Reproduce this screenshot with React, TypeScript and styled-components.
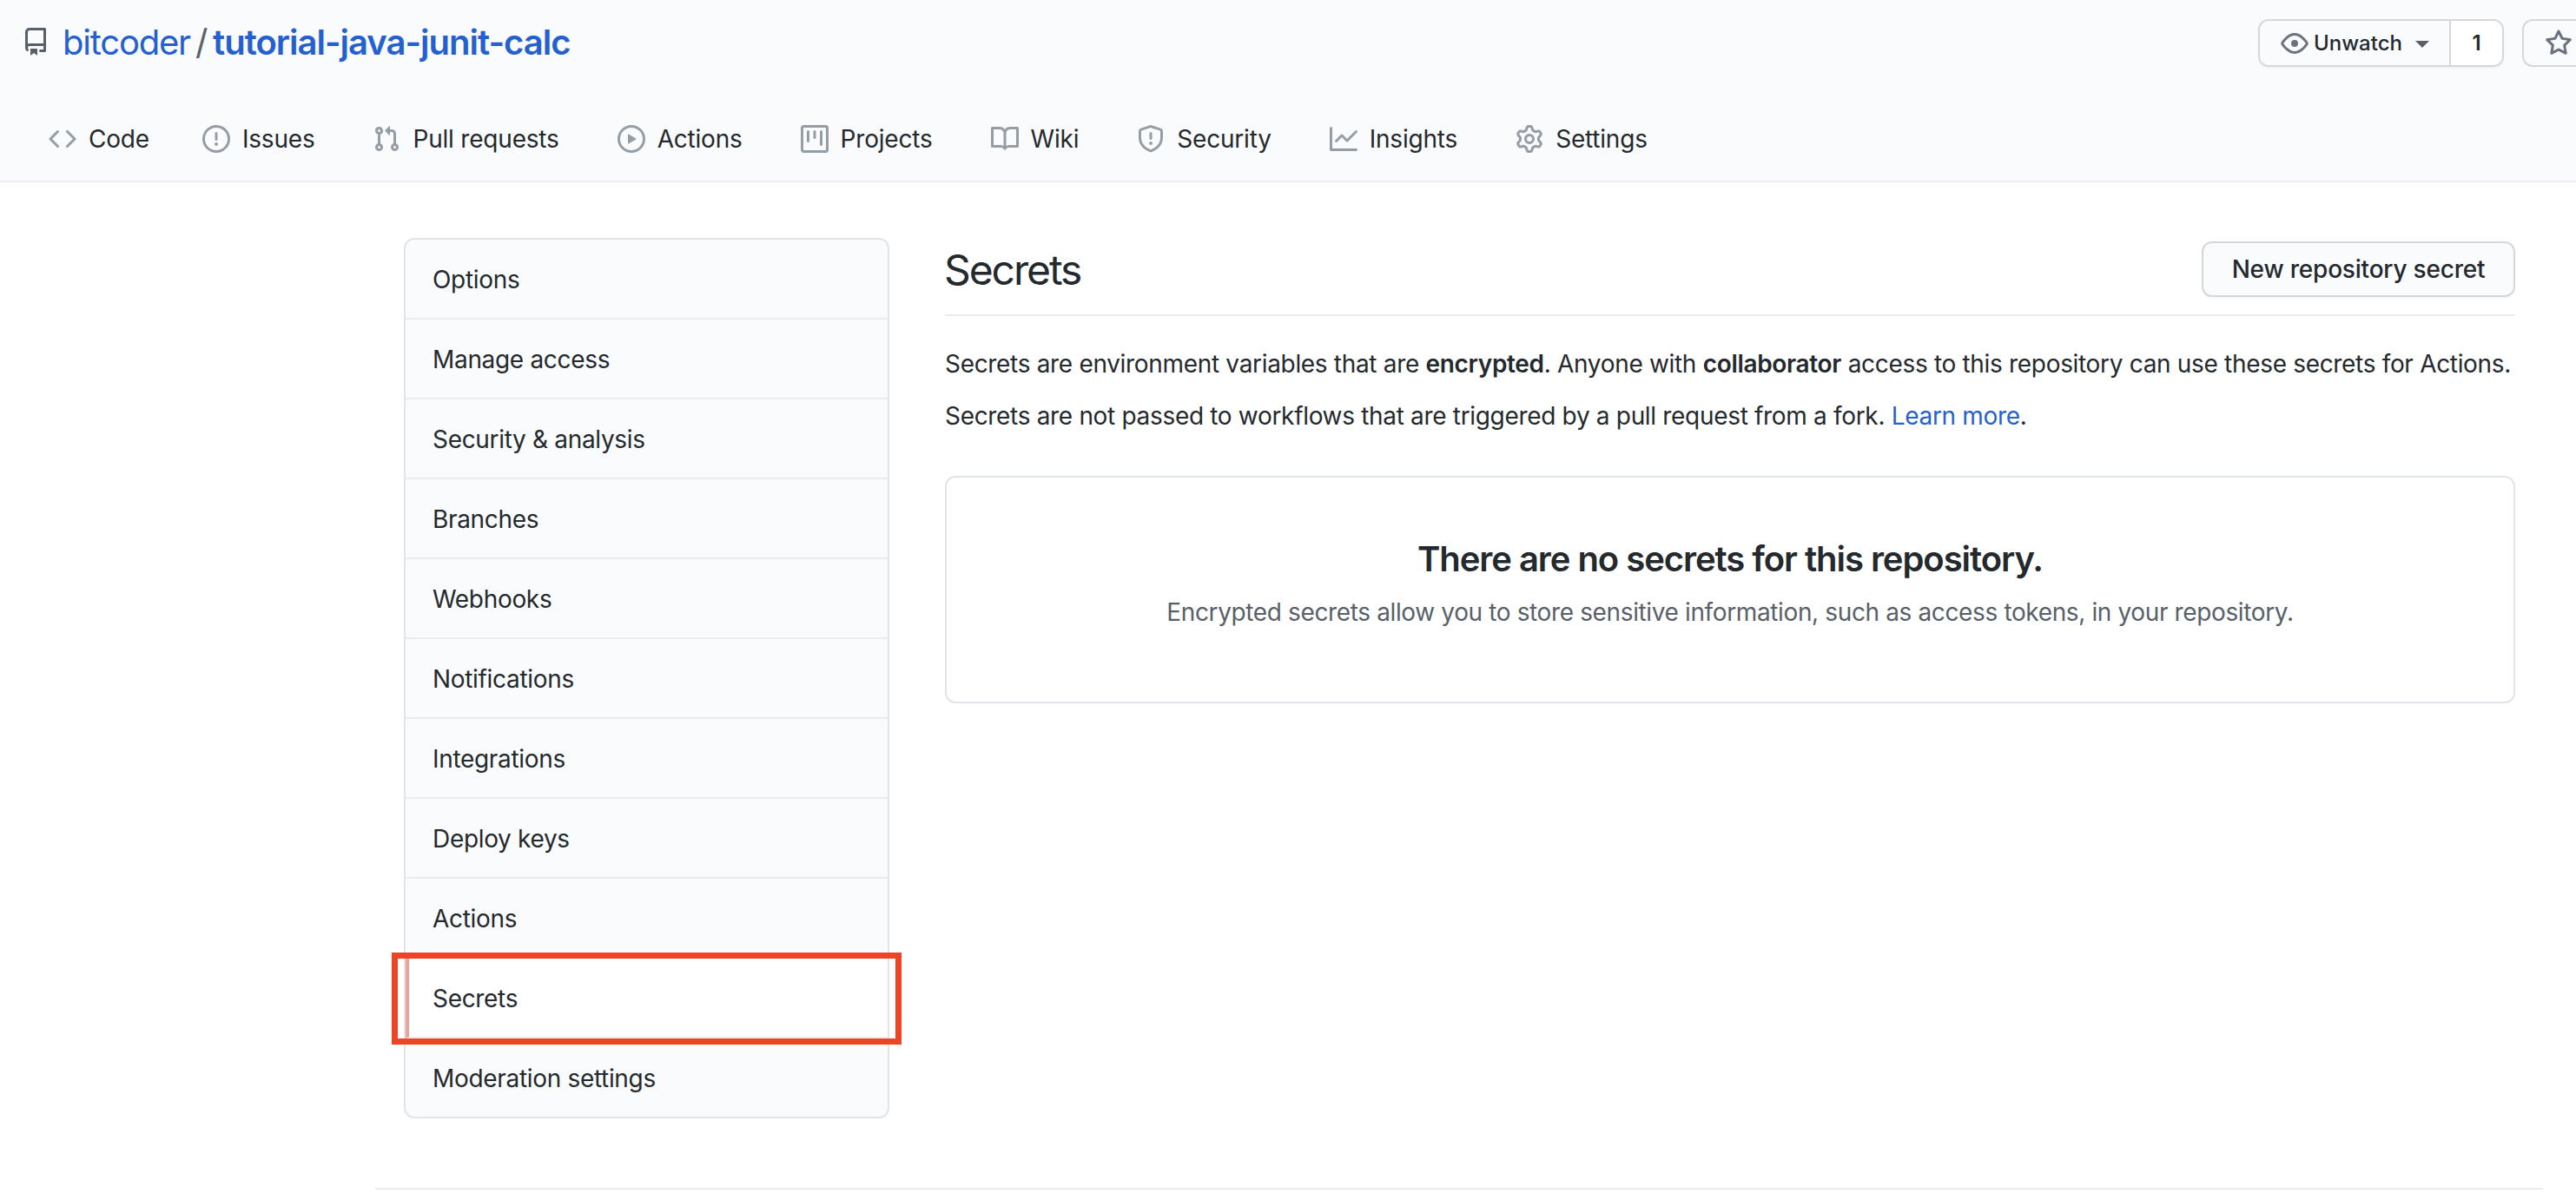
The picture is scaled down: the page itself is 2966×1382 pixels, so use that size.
import React from 'react';
import styled, { createGlobalStyle } from 'styled-components';

const GlobalStyle = createGlobalStyle`
  html, body {
    margin: 0;
    padding: 0;
    background: #fff;
    overflow: hidden;
  }
  body {
    font-family: Inter, "Liberation Sans", sans-serif;
    color: #24292e;
    letter-spacing: -0.32px;
  }
`;

const paths: Record<string, string> = {
  repo: 'M2 2.5A2.5 2.5 0 014.5 0h8.75a.75.75 0 01.75.75v12.5a.75.75 0 01-.75.75h-2.5a.75.75 0 110-1.5h1.75v-2h-8a1 1 0 00-.714 1.7.75.75 0 01-1.072 1.05A2.495 2.495 0 012 11.5v-9zm10.5-1V9h-8c-.356 0-.694.074-1 .208V2.5a1 1 0 011-1h8zM5 12.25v3.25a.25.25 0 00.4.2l1.45-1.087a.25.25 0 01.3 0L8.6 15.7a.25.25 0 00.4-.2v-3.25a.25.25 0 00-.25-.25h-3.5a.25.25 0 00-.25.25z',
  code: 'M4.72 3.22a.75.75 0 011.06 1.06L2.06 8l3.72 3.72a.75.75 0 11-1.06 1.06L.47 8.53a.75.75 0 010-1.06l4.25-4.25zm6.56 0a.75.75 0 10-1.06 1.06L13.94 8l-3.72 3.72a.75.75 0 101.06 1.06l4.25-4.25a.75.75 0 000-1.06l-4.25-4.25z',
  issue: 'M8 1.5a6.5 6.5 0 100 13 6.5 6.5 0 000-13zM0 8a8 8 0 1116 0A8 8 0 010 8zm9 3a1 1 0 11-2 0 1 1 0 012 0zm-.25-6.25a.75.75 0 00-1.5 0v3.5a.75.75 0 001.5 0v-3.5z',
  pull: 'M7.177 3.073L9.573.677A.25.25 0 0110 .854v4.792a.25.25 0 01-.427.177L7.177 3.427a.25.25 0 010-.354zM3.75 2.5a.75.75 0 100 1.5.75.75 0 000-1.5zm-2.25.75a2.25 2.25 0 113 2.122v5.256a2.251 2.251 0 11-1.5 0V5.372A2.25 2.25 0 011.5 3.25zM11 2.5h-1V4h1a1 1 0 011 1v5.628a2.251 2.251 0 101.5 0V5A2.5 2.5 0 0011 2.5zm1 10.25a.75.75 0 111.5 0 .75.75 0 01-1.5 0zM3.75 12a.75.75 0 100 1.5.75.75 0 000-1.5z',
  play: 'M1.5 8a6.5 6.5 0 1113 0 6.5 6.5 0 01-13 0zM8 0a8 8 0 100 16A8 8 0 008 0zM6.379 5.227A.25.25 0 006 5.442v5.117a.25.25 0 00.379.214l4.264-2.559a.25.25 0 000-.428L6.379 5.227z',
  project: 'M1.75 0A1.75 1.75 0 000 1.75v12.5C0 15.216.784 16 1.75 16h12.5A1.75 1.75 0 0016 14.25V1.75A1.75 1.75 0 0014.25 0H1.75zM1.5 1.75a.25.25 0 01.25-.25h12.5a.25.25 0 01.25.25v12.5a.25.25 0 01-.25.25H1.75a.25.25 0 01-.25-.25V1.75zM11.75 3a.75.75 0 00-.75.75v7.5a.75.75 0 001.5 0v-7.5a.75.75 0 00-.75-.75zm-8.25.75a.75.75 0 011.5 0v5.5a.75.75 0 01-1.5 0v-5.5zM8 3a.75.75 0 00-.75.75v3.5a.75.75 0 001.5 0v-3.5A.75.75 0 008 3z',
  book: 'M0 1.75A.75.75 0 01.75 1h4.253c1.227 0 2.317.59 3 1.501A3.744 3.744 0 0111.006 1h4.245a.75.75 0 01.75.75v10.5a.75.75 0 01-.75.75h-5.092c-.47 0-.92.214-1.21.586l-.345.466a.75.75 0 01-1.208 0l-.345-.466A1.5 1.5 0 005.84 13H.75a.75.75 0 01-.75-.75V1.75zm8.755 3a2.25 2.25 0 012.25-2.25H14.5v9h-3.757c-.71 0-1.4.201-1.992.572l.004-7.322zm-1.504 7.324l.004-5.073-.002-2.253A2.25 2.25 0 005.003 2.5H1.5v9h3.757a3.75 3.75 0 011.994.574z',
  shield: 'M7.467.133a1.75 1.75 0 011.066 0l5.25 1.68A1.75 1.75 0 0115 3.48V7c0 1.566-.32 3.182-1.303 4.682-.983 1.498-2.585 2.813-5.032 3.855a1.7 1.7 0 01-1.33 0c-2.447-1.042-4.049-2.357-5.032-3.855C1.32 10.182 1 8.566 1 7V3.48a1.75 1.75 0 011.217-1.667l5.25-1.68zm.61 1.429a.25.25 0 00-.153 0l-5.25 1.68a.25.25 0 00-.174.238V7c0 1.358.275 2.666 1.057 3.86.784 1.194 2.121 2.34 4.366 3.297a.2.2 0 00.154 0c2.245-.956 3.582-2.104 4.366-3.298C13.225 9.666 13.5 8.36 13.5 7V3.48a.25.25 0 00-.174-.237l-5.25-1.68zM9 10.5a1 1 0 11-2 0 1 1 0 012 0zm-.25-5.75a.75.75 0 10-1.5 0v3a.75.75 0 001.5 0v-3z',
  graph: 'M1.5 1.75a.75.75 0 00-1.5 0v12.5c0 .414.336.75.75.75h14.5a.75.75 0 000-1.5H1.5V1.75zm14.28 2.53a.75.75 0 00-1.06-1.06L10 7.94 7.53 5.47a.75.75 0 00-1.06 0L3.22 8.72a.75.75 0 001.06 1.06L7 7.06l2.47 2.47a.75.75 0 001.06 0l5.25-5.25z',
  gear: 'M7.429 1.525a6.593 6.593 0 011.142 0c.036.003.108.036.137.146l.289 1.105c.147.56.55.967.997 1.189.174.086.341.183.501.29.417.278.97.423 1.53.27l1.102-.303c.11-.03.175.016.195.046.219.31.41.641.573.989.014.031.022.11-.059.19l-.815.806c-.411.406-.562.957-.53 1.456a4.588 4.588 0 010 .582c-.032.499.119 1.05.53 1.456l.815.806c.08.08.073.159.059.19a6.494 6.494 0 01-.573.99c-.02.029-.086.074-.195.045l-1.103-.303c-.559-.153-1.112-.008-1.529.27-.16.107-.327.204-.5.29-.449.222-.851.628-.998 1.189l-.289 1.105c-.029.11-.101.143-.137.146a6.613 6.613 0 01-1.142 0c-.036-.003-.108-.037-.137-.146l-.289-1.105c-.147-.56-.55-.967-.997-1.189a4.502 4.502 0 01-.501-.29c-.417-.278-.97-.423-1.53-.27l-1.102.303c-.11.03-.175-.016-.195-.046a6.492 6.492 0 01-.573-.989c-.014-.031-.022-.11.059-.19l.815-.806c.411-.406.562-.957.53-1.456a4.587 4.587 0 010-.582c.032-.499-.119-1.05-.53-1.456l-.815-.806c-.08-.08-.073-.159-.059-.19a6.44 6.44 0 01.573-.99c.02-.029.086-.075.195-.045l1.103.303c.559.153 1.112.008 1.529-.27.16-.107.327-.204.5-.29.449-.222.851-.628.998-1.189l.289-1.105c.029-.11.101-.143.137-.146zM8 0c-.236 0-.47.01-.701.03-.743.065-1.29.615-1.458 1.261l-.29 1.106c-.017.066-.078.158-.211.224a5.994 5.994 0 00-.668.386c-.123.082-.233.09-.3.071L3.27 2.776c-.644-.177-1.392.02-1.82.63a7.977 7.977 0 00-.704 1.217c-.315.675-.111 1.422.363 1.891l.815.806c.05.048.098.147.088.294a6.084 6.084 0 000 .772c.01.147-.038.246-.088.294l-.815.806c-.474.469-.678 1.216-.363 1.891.2.428.436.835.704 1.218.428.609 1.176.806 1.82.63l1.103-.303c.066-.019.176-.011.299.071.213.143.436.272.668.386.133.066.194.158.212.224l.289 1.106c.169.646.715 1.196 1.458 1.26a8.094 8.094 0 001.402 0c.743-.064 1.29-.614 1.458-1.26l.29-1.106c.017-.066.078-.158.211-.224a5.98 5.98 0 00.668-.386c.123-.082.233-.09.3-.071l1.102.302c.644.177 1.392-.02 1.82-.63.268-.382.505-.789.704-1.217.315-.675.111-1.422-.364-1.891l-.814-.806c-.05-.048-.098-.147-.088-.294a6.1 6.1 0 000-.772c-.01-.147.039-.246.088-.294l.814-.806c.475-.469.679-1.216.364-1.891a7.992 7.992 0 00-.704-1.218c-.428-.609-1.176-.806-1.82-.63l-1.103.303c-.066.019-.176.011-.299-.071a5.991 5.991 0 00-.668-.386c-.133-.066-.194-.158-.212-.224L10.16 1.29C9.99.645 9.444.095 8.701.031A8.094 8.094 0 008 0zm1.5 8a1.5 1.5 0 11-3 0 1.5 1.5 0 013 0zM11 8a3 3 0 11-6 0 3 3 0 016 0z',
  eye: 'M1.679 7.932c.412-.621 1.242-1.75 2.366-2.717C5.175 4.242 6.527 3.5 8 3.5c1.473 0 2.824.742 3.955 1.715 1.124.967 1.954 2.096 2.366 2.717a.119.119 0 010 .136c-.412.621-1.242 1.75-2.366 2.717C10.825 11.758 9.473 12.5 8 12.5c-1.473 0-2.824-.742-3.955-1.715C2.92 9.818 2.09 8.69 1.679 8.068a.119.119 0 010-.136zM8 2c-1.981 0-3.67.992-4.933 2.078C1.797 5.169.88 6.423.43 7.1a1.619 1.619 0 000 1.798c.45.678 1.367 1.932 2.637 3.024C4.329 13.008 6.019 14 8 14c1.981 0 3.67-.992 4.933-2.078 1.27-1.091 2.187-2.345 2.637-3.023a1.619 1.619 0 000-1.798c-.45-.678-1.367-1.932-2.637-3.023C11.671 2.992 9.981 2 8 2zm0 8a2 2 0 100-4 2 2 0 000 4z',
  star: 'M8 .25a.75.75 0 01.673.418l1.882 3.815 4.21.612a.75.75 0 01.416 1.279l-3.046 2.97.719 4.192a.75.75 0 01-1.088.791L8 12.347l-3.766 1.98a.75.75 0 01-1.088-.79l.72-4.194L.818 6.374a.75.75 0 01.416-1.28l4.21-.611L7.327.668A.75.75 0 018 .25zm0 2.445L6.615 5.5a.75.75 0 01-.564.41l-3.097.45 2.24 2.184a.75.75 0 01.216.664l-.528 3.084 2.769-1.456a.75.75 0 01.698 0l2.77 1.456-.53-3.084a.75.75 0 01.216-.664l2.24-2.183-3.096-.45a.75.75 0 01-.564-.41L8 2.694z',
};

const Svg = styled.svg<{ $size: number; $color: string }>`
  width: ${p => p.$size}px;
  height: ${p => p.$size}px;
  flex-shrink: 0;
  fill: ${p => p.$color};
  display: block;
`;

const Icon: React.FC<{ name: string; size?: number; color?: string }> = ({ name, size = 32, color = '#959da5' }) => (
  <Svg viewBox="0 0 16 16" $size={size} $color={color}>
    <path fillRule="evenodd" d={paths[name]} />
  </Svg>
);

const Page = styled.div`
  width: 2966px;
  height: 1382px;
  overflow: hidden;
`;

const RepoHeader = styled.header`
  height: 210px;
  box-sizing: border-box;
  background: #fafbfc;
  border-bottom: 2px solid #eaecef;
  display: flex;
  flex-direction: column;
`;

const TopRow = styled.div`
  display: flex;
  justify-content: space-between;
  padding: 22px 0 0 25px;
  height: 55px;
`;

const RepoTitle = styled.h1`
  display: flex;
  align-items: center;
  margin: 0;
  height: 52px;
  font-size: 40px;
  font-weight: 400;
`;

const OwnerLink = styled.a`
  color: #2460d0;
  margin-left: 15px;
  letter-spacing: -1.2px;
`;

const Slash = styled.span`
  color: #586069;
  margin: 0 6px;
`;

const RepoLink = styled.a`
  color: #2460d0;
  font-weight: 600;
  letter-spacing: -1px;
`;

const Actions = styled.div`
  display: flex;
  gap: 21px;
  margin-right: -62px;
`;

const ButtonGroup = styled.div`
  display: flex;
  height: 55px;
  box-sizing: border-box;
  width: 283px;
  border: 2px solid #d5d7da;
  border-radius: 12px;
  overflow: hidden;
  box-shadow: 0 2px 2px rgba(27, 31, 35, 0.04);
`;

const WatchButton = styled.div`
  width: 220px;
  box-sizing: border-box;
  background: #fafbfc;
  border-right: 2px solid #d5d7da;
  display: flex;
  align-items: center;
  padding-left: 24px;
  font-size: 24px;
  font-weight: 500;
  letter-spacing: 0;
`;

const WatchLabel = styled.span`
  margin-left: 6px;
`;

const Caret = styled.span`
  margin-left: 15px;
  width: 0;
  height: 0;
  border-left: 8px solid transparent;
  border-right: 8px solid transparent;
  border-top: 8px solid #586069;
  margin-top: 3px;
`;

const Count = styled.div`
  flex: 1;
  background: #fff;
  display: flex;
  align-items: center;
  justify-content: center;
  font-size: 24px;
  font-weight: 600;
`;

const StarButton = styled.div`
  width: 124px;
  height: 55px;
  box-sizing: border-box;
  border: 2px solid #d5d7da;
  border-radius: 12px;
  background: #fafbfc;
  display: flex;
  align-items: center;
  padding-left: 24px;
`;

const Tabs = styled.nav`
  display: flex;
  align-items: center;
  margin-top: 59px;
  height: 48px;
  padding-left: 56px;
  gap: 67px;
`;

const Tab = styled.a`
  display: flex;
  align-items: center;
  gap: 14px;
  font-size: 28px;
  color: #24292e;
  line-height: 48px;
  letter-spacing: -0.2px;

  &:first-child {
    margin-right: -6px;
  }
`;

const Content = styled.div`
  width: 2496px;
  margin-left: 432px;
  box-sizing: border-box;
  padding: 64px 32px 0 33px;
  display: flex;
  gap: 64px;
`;

const SideMenu = styled.nav`
  width: 559px;
  flex-shrink: 0;
  box-sizing: border-box;
  border: 2px solid #e1e4e8;
  border-radius: 12px;
  background: #fafbfc;
  align-self: flex-start;
`;

const MenuItem = styled.a<{ $selected?: boolean }>`
  display: flex;
  align-items: center;
  position: relative;
  box-sizing: border-box;
  height: 92px;
  padding: 2px 0 0 ${p => (p.$selected ? '27px' : '31px')};
  font-size: 28px;
  color: #24292e;
  border-bottom: 2px solid #eaecef;
  background: ${p => (p.$selected ? '#fff' : 'transparent')};
  border-left: ${p => (p.$selected ? '4px solid #e8a497' : 'none')};

  &:last-child {
    border-bottom: none;
    height: 90px;
  }
`;

const Highlight = styled.span`
  position: absolute;
  top: -7px;
  bottom: -9px;
  left: -20px;
  right: -16px;
  border: 7px solid #ee4426;
  pointer-events: none;
`;

const Main = styled.main`
  flex: 1;
  min-width: 0;
`;

const MainHeader = styled.div`
  display: flex;
  justify-content: space-between;
  align-items: center;
  height: 90px;
  box-sizing: border-box;
  padding-bottom: 16px;
  border-bottom: 2px solid #eaecef;
`;

const Heading = styled.h2`
  margin: 0 0 0 -1px;
  font-size: 48px;
  font-weight: 400;
  letter-spacing: -2.1px;
`;

const NewButton = styled.button`
  height: 64px;
  width: 361px;
  box-sizing: border-box;
  font: 500 28px Inter, "Liberation Sans", sans-serif;
  letter-spacing: -0.2px;
  color: #24292e;
  background: #fafbfc;
  border: 2px solid #d5d7da;
  border-radius: 12px;
  box-shadow: 0 2px 2px rgba(27, 31, 35, 0.04);
  padding: 0;
`;

const Para = styled.p`
  margin: 18px 0 0;
  font-size: 28px;
  line-height: 42px;
  white-space: nowrap;
  &:first-of-type {
    margin-top: 34px;
  }
`;

const Strong = styled.strong`
  font-weight: 600;
`;

const Link = styled.a`
  color: #2460d0;
`;

const Blankslate = styled.div`
  margin-top: 48px;
  height: 262px;
  box-sizing: border-box;
  border: 2px solid #e1e4e8;
  border-radius: 12px;
  text-align: center;
  padding-top: 68px;
`;

const BlankTitle = styled.h3`
  margin: 0;
  font-size: 40px;
  font-weight: 600;
  line-height: 52px;
  letter-spacing: -1.05px;
`;

const BlankText = styled.p`
  margin: 14px 0 0;
  font-size: 28px;
  line-height: 42px;
  color: #586069;
  letter-spacing: -0.37px;
`;

const FooterLine = styled.div`
  width: 2496px;
  margin-left: 432px;
  margin-top: 80px;
  border-top: 2px solid #eaecef;
`;

const tabs = [
  { icon: 'code', label: 'Code' },
  { icon: 'issue', label: 'Issues' },
  { icon: 'pull', label: 'Pull requests' },
  { icon: 'play', label: 'Actions' },
  { icon: 'project', label: 'Projects' },
  { icon: 'book', label: 'Wiki' },
  { icon: 'shield', label: 'Security' },
  { icon: 'graph', label: 'Insights' },
  { icon: 'gear', label: 'Settings' },
];

const menu = [
  'Options',
  'Manage access',
  'Security & analysis',
  'Branches',
  'Webhooks',
  'Notifications',
  'Integrations',
  'Deploy keys',
  'Actions',
  'Secrets',
  'Moderation settings',
];

const App: React.FC = () => (
  <Page>
    <GlobalStyle />
    <RepoHeader>
      <TopRow>
        <RepoTitle>
          <Icon name="repo" color="#586069" />
          <OwnerLink>bitcoder</OwnerLink>
          <Slash>/</Slash>
          <RepoLink>tutorial-java-junit-calc</RepoLink>
        </RepoTitle>
        <Actions>
          <ButtonGroup>
            <WatchButton>
              <Icon name="eye" color="#6a737d" />
              <WatchLabel>Unwatch</WatchLabel>
              <Caret />
            </WatchButton>
            <Count>1</Count>
          </ButtonGroup>
          <StarButton>
            <Icon name="star" color="#6a737d" />
          </StarButton>
        </Actions>
      </TopRow>
      <Tabs>
        {tabs.map(t => (
          <Tab key={t.label}>
            <Icon name={t.icon} />
            {t.label}
          </Tab>
        ))}
      </Tabs>
    </RepoHeader>
    <Content>
      <SideMenu>
        {menu.map(item => (
          <MenuItem key={item} $selected={item === 'Secrets'}>
            {item}
            {item === 'Secrets' && <Highlight />}
          </MenuItem>
        ))}
      </SideMenu>
      <Main>
        <MainHeader>
          <Heading>Secrets</Heading>
          <NewButton>New repository secret</NewButton>
        </MainHeader>
        <Para>
          Secrets are environment variables that are <Strong>encrypted</Strong>. Anyone with <Strong>collaborator</Strong> access to this repository can use these secrets for Actions.
        </Para>
        <Para>
          Secrets are not passed to workflows that are triggered by a pull request from a fork. <Link>Learn more</Link>.
        </Para>
        <Blankslate>
          <BlankTitle>There are no secrets for this repository.</BlankTitle>
          <BlankText>Encrypted secrets allow you to store sensitive information, such as access tokens, in your repository.</BlankText>
        </Blankslate>
      </Main>
    </Content>
    <FooterLine />
  </Page>
);

export default App;
